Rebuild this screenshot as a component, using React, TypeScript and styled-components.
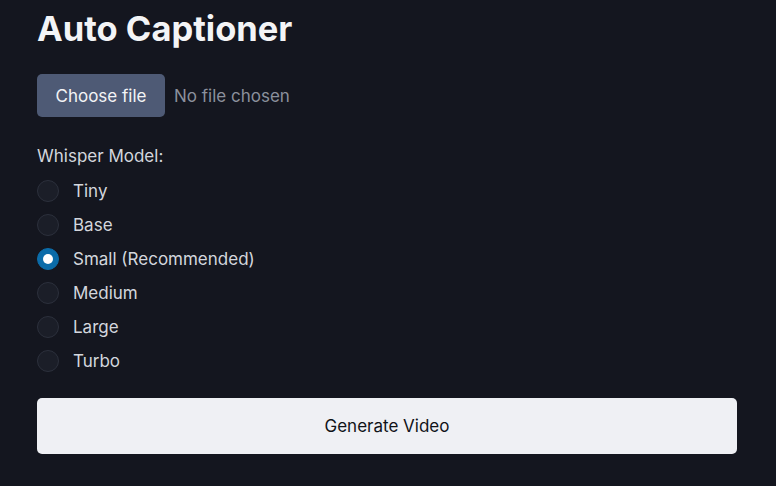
import React, { useState } from "react";
import styled, { createGlobalStyle } from "styled-components";

const Global = createGlobalStyle`
  html, body { margin: 0; padding: 0; background: #14161f; }
  body { font-family: Inter, "Noto Sans", sans-serif; color: #e4e6ec; }
`;

const Page = styled.div`
  padding: 5px 39px 0 37px;
  display: flex;
  flex-direction: column;
`;

const Title = styled.h1`
  margin: 0;
  font-size: 34.5px;
  line-height: 48px;
  font-weight: 700;
  color: #f3f4f6;
`;

const FileRow = styled.div`
  display: flex;
  align-items: center;
  gap: 9px;
  margin-top: 21px;
`;

const FileButton = styled.button`
  height: 43px;
  width: 128px;
  border: none;
  border-radius: 5px;
  background: #4e5a75;
  color: #f3f4f6;
  font-family: inherit;
  font-size: 17px;
  padding: 0;
`;

const FileText = styled.span`
  font-size: 17px;
  color: #8b909c;
`;

const Label = styled.div`
  margin-top: 28px;
  font-size: 17px;
  line-height: 22px;
  color: #d3d6dd;
`;

const RadioList = styled.div`
  display: flex;
  flex-direction: column;
  margin-top: 7px;
`;

const RadioRow = styled.label`
  display: flex;
  align-items: center;
  height: 34px;
  gap: 14px;
  font-size: 17px;
  color: #d3d6dd;
`;

const Circle = styled.span<{ $on: boolean }>`
  width: 22px;
  height: 22px;
  border-radius: 50%;
  box-sizing: border-box;
  display: flex;
  align-items: center;
  justify-content: center;
  background: ${(p) => (p.$on ? "#0b6ca9" : "#1b1e28")};
  border: 1px solid ${(p) => (p.$on ? "#0b6ca9" : "#2c303c")};
  &::after {
    content: "";
    display: ${(p) => (p.$on ? "block" : "none")};
    width: 10px;
    height: 10px;
    border-radius: 50%;
    background: #ffffff;
  }
`;

const Generate = styled.button`
  margin-top: 20px;
  height: 56px;
  width: 700px;
  border: none;
  border-radius: 5px;
  background: #eff0f4;
  color: #111318;
  font-family: inherit;
  font-size: 17px;
`;

const models = ["Tiny", "Base", "Small (Recommended)", "Medium", "Large", "Turbo"];

export default function App() {
  const [sel, setSel] = useState(2);
  return (
    <>
      <Global />
      <Page>
        <Title>Auto Captioner</Title>
        <FileRow>
          <FileButton>Choose file</FileButton>
          <FileText>No file chosen</FileText>
        </FileRow>
        <Label>Whisper Model:</Label>
        <RadioList>
          {models.map((m, i) => (
            <RadioRow key={m} onClick={() => setSel(i)}>
              <Circle $on={sel === i} />
              {m}
            </RadioRow>
          ))}
        </RadioList>
        <Generate>Generate Video</Generate>
      </Page>
    </>
  );
}
